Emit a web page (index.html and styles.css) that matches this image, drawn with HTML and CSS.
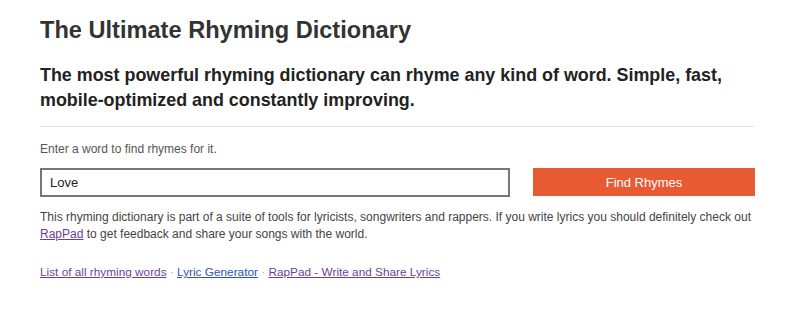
FILE: index.html
```html
<!DOCTYPE html>
<html>
<head>
<meta charset="utf-8">
<link rel="stylesheet" href="styles.css">
</head>
<body>
<div class="page">
  <h1 class="title">The Ultimate Rhyming Dictionary</h1>
  <h2 class="lead">The most powerful rhyming dictionary can rhyme any kind of word. Simple, fast, mobile-optimized and constantly improving.</h2>
  <hr class="rule">
  <p class="hint">Enter a word to find rhymes for it.</p>
  <form class="search">
    <input class="word" type="text" value="Love">
    <button class="go" type="button">Find Rhymes</button>
  </form>
  <p class="about">This rhyming dictionary is part of a suite of tools for lyricists, songwriters and rappers. If you write lyrics you should definitely check out <a class="visited" href="#">RapPad</a> to get feedback and share your songs with the world.</p>
  <p class="links"><a class="visited" href="#">List of all rhyming words</a> <span class="dot">·</span> <a class="fresh" href="#">Lyric Generator</a> <span class="dot">·</span> <a class="visited" href="#">RapPad - Write and Share Lyrics</a></p>
</div>
</body>
</html>
```
FILE: styles.css
```css
html, body { margin: 0; padding: 0; background: #fff; }
body { font-family: "Liberation Sans", Arial, sans-serif; color: #333; }
.page { width: 715px; margin-left: 40px; padding-top: 14px; }
.title { font-size: 23.6px; font-weight: bold; margin: 0; line-height: 32px; color: #333; }
.lead { font-size: 17.9px; font-weight: bold; margin: 17px 0 0; line-height: 25px; color: #222; }
.rule { border: 0; border-top: 1px solid #e6e6e6; margin: 13px 0 0; }
.hint { font-size: 12px; color: #555; margin: 14px 0 0; line-height: 16px; }
.search { display: grid; grid-template-columns: 470px 1fr; column-gap: 23px; margin-top: 11px; }
.word { box-sizing: border-box; height: 29px; border: 2px solid #777; padding: 0 8px; font: 13px "Liberation Sans", Arial, sans-serif; color: #222; margin: 0; }
.go { height: 28px; border: 0; background: #e85a32; color: #fff; font: 13px "Liberation Sans", Arial, sans-serif; margin: 0; }
.about { font-size: 12px; line-height: 17px; color: #444; margin: 12px 0 0; }
.links { font-size: 11.8px; line-height: 17px; margin: 21px 0 0; color: #999; }
.visited { color: #6a3fa0; }
.fresh { color: #2a52be; }
.dot { color: #aaa; }
```
